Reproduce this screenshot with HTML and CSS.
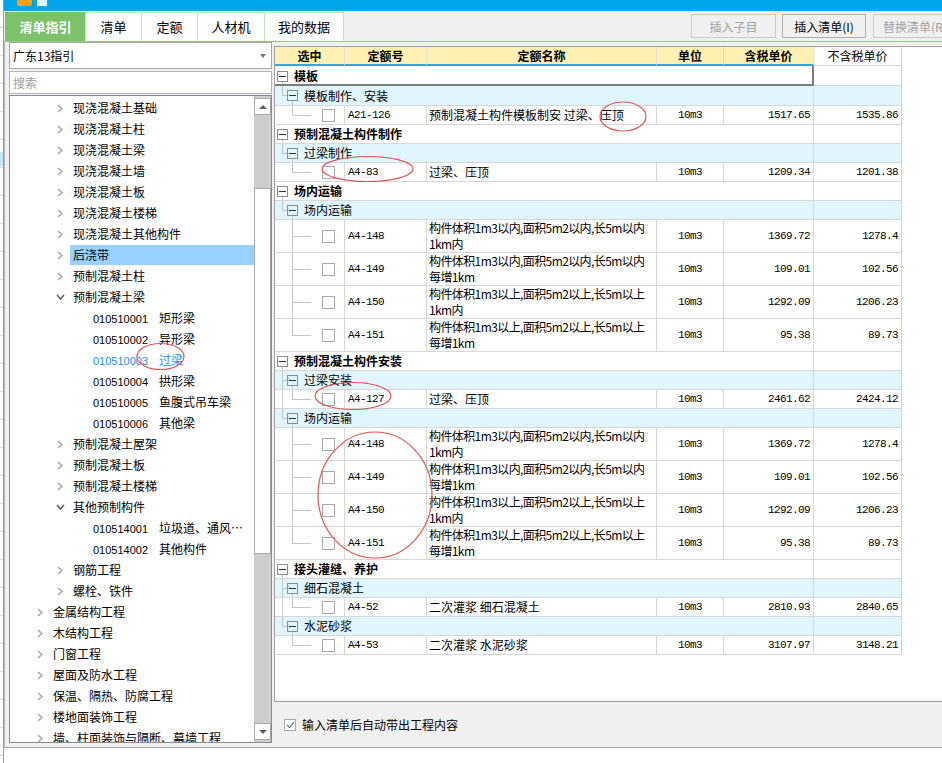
FILE: index.html
```html
<!DOCTYPE html>
<html lang="zh-CN">
<head>
<meta charset="utf-8">
<title>清单指引</title>
<link rel="stylesheet" href="styles.css">
</head>
<body>
<div class="bgstrip"></div>
<div class="dialog">
  <div class="titlebar"><span class="appicon"></span><span class="appmark"></span></div>
  <div class="toolbar">
    <div class="tabs">
      <div class="tab active">清单指引</div>
      <div class="tab w56">清单</div>
      <div class="tab w56">定额</div>
      <div class="tab w67">人材机</div>
      <div class="tab">我的数据</div>
    </div>
    <div class="tbtns">
      <button class="btn dis">插入子目</button>
      <button class="btn b2">插入清单(I)</button>
      <button class="btn dis b3">替换清单(R)</button>
    </div>
  </div>
  <div class="main">
    <div class="left">
      <div class="combo"><span>广东13指引</span><span class="caret"></span></div>
      <div class="search">搜索</div>
      <div class="tree">
        <div class="tlist">
          <div class="tr l2"><span class="chev"><svg width="6" height="9" viewBox="0 0 6 9"><path d="M1 1l4 3.5L1 8" fill="none" stroke="#a6a6a6" stroke-width="1.5"/></svg></span><span class="lbl">现浇混凝土基础</span></div>
          <div class="tr l2"><span class="chev"><svg width="6" height="9" viewBox="0 0 6 9"><path d="M1 1l4 3.5L1 8" fill="none" stroke="#a6a6a6" stroke-width="1.5"/></svg></span><span class="lbl">现浇混凝土柱</span></div>
          <div class="tr l2"><span class="chev"><svg width="6" height="9" viewBox="0 0 6 9"><path d="M1 1l4 3.5L1 8" fill="none" stroke="#a6a6a6" stroke-width="1.5"/></svg></span><span class="lbl">现浇混凝土梁</span></div>
          <div class="tr l2"><span class="chev"><svg width="6" height="9" viewBox="0 0 6 9"><path d="M1 1l4 3.5L1 8" fill="none" stroke="#a6a6a6" stroke-width="1.5"/></svg></span><span class="lbl">现浇混凝土墙</span></div>
          <div class="tr l2"><span class="chev"><svg width="6" height="9" viewBox="0 0 6 9"><path d="M1 1l4 3.5L1 8" fill="none" stroke="#a6a6a6" stroke-width="1.5"/></svg></span><span class="lbl">现浇混凝土板</span></div>
          <div class="tr l2"><span class="chev"><svg width="6" height="9" viewBox="0 0 6 9"><path d="M1 1l4 3.5L1 8" fill="none" stroke="#a6a6a6" stroke-width="1.5"/></svg></span><span class="lbl">现浇混凝土楼梯</span></div>
          <div class="tr l2"><span class="chev"><svg width="6" height="9" viewBox="0 0 6 9"><path d="M1 1l4 3.5L1 8" fill="none" stroke="#a6a6a6" stroke-width="1.5"/></svg></span><span class="lbl">现浇混凝土其他构件</span></div>
          <div class="tr l2 sel"><span class="chev"><svg width="6" height="9" viewBox="0 0 6 9"><path d="M1 1l4 3.5L1 8" fill="none" stroke="#a6a6a6" stroke-width="1.5"/></svg></span><span class="lbl">后浇带</span></div>
          <div class="tr l2"><span class="chev"><svg width="6" height="9" viewBox="0 0 6 9"><path d="M1 1l4 3.5L1 8" fill="none" stroke="#a6a6a6" stroke-width="1.5"/></svg></span><span class="lbl">预制混凝土柱</span></div>
          <div class="tr l2"><span class="chev"><svg width="9" height="6" viewBox="0 0 9 6"><path d="M1 1l3.5 4L8 1" fill="none" stroke="#5a5a5a" stroke-width="1.5"/></svg></span><span class="lbl">预制混凝土梁</span></div>
          <div class="tr l3"><span class="chev"></span><span class="lbl"><span class="tcode">010510001</span>矩形梁</span></div>
          <div class="tr l3"><span class="chev"></span><span class="lbl"><span class="tcode">010510002</span>异形梁</span></div>
          <div class="tr l3 hl"><span class="chev"></span><span class="lbl"><span class="tcode">010510003</span>过梁</span></div>
          <div class="tr l3"><span class="chev"></span><span class="lbl"><span class="tcode">010510004</span>拱形梁</span></div>
          <div class="tr l3"><span class="chev"></span><span class="lbl"><span class="tcode">010510005</span>鱼腹式吊车梁</span></div>
          <div class="tr l3"><span class="chev"></span><span class="lbl"><span class="tcode">010510006</span>其他梁</span></div>
          <div class="tr l2"><span class="chev"><svg width="6" height="9" viewBox="0 0 6 9"><path d="M1 1l4 3.5L1 8" fill="none" stroke="#a6a6a6" stroke-width="1.5"/></svg></span><span class="lbl">预制混凝土屋架</span></div>
          <div class="tr l2"><span class="chev"><svg width="6" height="9" viewBox="0 0 6 9"><path d="M1 1l4 3.5L1 8" fill="none" stroke="#a6a6a6" stroke-width="1.5"/></svg></span><span class="lbl">预制混凝土板</span></div>
          <div class="tr l2"><span class="chev"><svg width="6" height="9" viewBox="0 0 6 9"><path d="M1 1l4 3.5L1 8" fill="none" stroke="#a6a6a6" stroke-width="1.5"/></svg></span><span class="lbl">预制混凝土楼梯</span></div>
          <div class="tr l2"><span class="chev"><svg width="9" height="6" viewBox="0 0 9 6"><path d="M1 1l3.5 4L8 1" fill="none" stroke="#5a5a5a" stroke-width="1.5"/></svg></span><span class="lbl">其他预制构件</span></div>
          <div class="tr l3"><span class="chev"></span><span class="lbl"><span class="tcode">010514001</span>垃圾道、通风…</span></div>
          <div class="tr l3"><span class="chev"></span><span class="lbl"><span class="tcode">010514002</span>其他构件</span></div>
          <div class="tr l2"><span class="chev"><svg width="6" height="9" viewBox="0 0 6 9"><path d="M1 1l4 3.5L1 8" fill="none" stroke="#a6a6a6" stroke-width="1.5"/></svg></span><span class="lbl">钢筋工程</span></div>
          <div class="tr l2"><span class="chev"><svg width="6" height="9" viewBox="0 0 6 9"><path d="M1 1l4 3.5L1 8" fill="none" stroke="#a6a6a6" stroke-width="1.5"/></svg></span><span class="lbl">螺栓、铁件</span></div>
          <div class="tr l1"><span class="chev"><svg width="6" height="9" viewBox="0 0 6 9"><path d="M1 1l4 3.5L1 8" fill="none" stroke="#a6a6a6" stroke-width="1.5"/></svg></span><span class="lbl">金属结构工程</span></div>
          <div class="tr l1"><span class="chev"><svg width="6" height="9" viewBox="0 0 6 9"><path d="M1 1l4 3.5L1 8" fill="none" stroke="#a6a6a6" stroke-width="1.5"/></svg></span><span class="lbl">木结构工程</span></div>
          <div class="tr l1"><span class="chev"><svg width="6" height="9" viewBox="0 0 6 9"><path d="M1 1l4 3.5L1 8" fill="none" stroke="#a6a6a6" stroke-width="1.5"/></svg></span><span class="lbl">门窗工程</span></div>
          <div class="tr l1"><span class="chev"><svg width="6" height="9" viewBox="0 0 6 9"><path d="M1 1l4 3.5L1 8" fill="none" stroke="#a6a6a6" stroke-width="1.5"/></svg></span><span class="lbl">屋面及防水工程</span></div>
          <div class="tr l1"><span class="chev"><svg width="6" height="9" viewBox="0 0 6 9"><path d="M1 1l4 3.5L1 8" fill="none" stroke="#a6a6a6" stroke-width="1.5"/></svg></span><span class="lbl">保温、隔热、防腐工程</span></div>
          <div class="tr l1"><span class="chev"><svg width="6" height="9" viewBox="0 0 6 9"><path d="M1 1l4 3.5L1 8" fill="none" stroke="#a6a6a6" stroke-width="1.5"/></svg></span><span class="lbl">楼地面装饰工程</span></div>
          <div class="tr l1"><span class="chev"><svg width="6" height="9" viewBox="0 0 6 9"><path d="M1 1l4 3.5L1 8" fill="none" stroke="#a6a6a6" stroke-width="1.5"/></svg></span><span class="lbl">墙、柱面装饰与隔断、幕墙工程</span></div>
        </div>
        <div class="vscroll">
          <div class="sbtn up"></div>
          <div class="gap1"></div>
          <div class="thumb"></div>
          <div class="gap2"></div>
          <div class="sbtn down"></div>
        </div>
      </div>
    </div>
    <div class="right">
      <div class="gridwrap">
        <div class="grid">
          <div class="c hd">选中</div><div class="c hd">定额号</div><div class="c hd">定额名称</div><div class="c hd">单位</div><div class="c hd">含税单价</div><div class="c hd nt">不含税单价</div>

          <div class="c span5 cat focus"><i class="bx"></i>模板</div><div class="c lc"></div>
          <div class="c span5 sub"><i class="bx"></i>模板制作、安装</div><div class="c lc subc"></div>
          <div class="c sl"><i class="cb"></i></div><div class="c no mono">A21-126</div><div class="c nm">预制混凝土构件模板制安 过梁、压顶</div><div class="c un mono">10m3</div><div class="c pr mono">1517.65</div><div class="c pr mono lc">1535.86</div>

          <div class="c span5 cat"><i class="bx"></i>预制混凝土构件制作</div><div class="c lc"></div>
          <div class="c span5 sub"><i class="bx"></i>过梁制作</div><div class="c lc subc"></div>
          <div class="c sl"><i class="cb"></i></div><div class="c no mono">A4-83</div><div class="c nm">过梁、压顶</div><div class="c un mono">10m3</div><div class="c pr mono">1209.34</div><div class="c pr mono lc">1201.38</div>

          <div class="c span5 cat"><i class="bx"></i>场内运输</div><div class="c lc"></div>
          <div class="c span5 sub"><i class="bx"></i>场内运输</div><div class="c lc subc"></div>
          <div class="c sl cont"><i class="cb"></i></div><div class="c no mono">A4-148</div><div class="c nm two"><span>构件体积1m3以内,面积5m2以内,长5m以内</span><span>1km内</span></div><div class="c un mono">10m3</div><div class="c pr mono">1369.72</div><div class="c pr mono lc">1278.4</div>
          <div class="c sl cont"><i class="cb"></i></div><div class="c no mono">A4-149</div><div class="c nm two"><span>构件体积1m3以内,面积5m2以内,长5m以内</span><span>每增1km</span></div><div class="c un mono">10m3</div><div class="c pr mono">109.01</div><div class="c pr mono lc">102.56</div>
          <div class="c sl cont"><i class="cb"></i></div><div class="c no mono">A4-150</div><div class="c nm two"><span>构件体积1m3以上,面积5m2以上,长5m以上</span><span>1km内</span></div><div class="c un mono">10m3</div><div class="c pr mono">1292.09</div><div class="c pr mono lc">1206.23</div>
          <div class="c sl"><i class="cb"></i></div><div class="c no mono">A4-151</div><div class="c nm two"><span>构件体积1m3以上,面积5m2以上,长5m以上</span><span>每增1km</span></div><div class="c un mono">10m3</div><div class="c pr mono">95.38</div><div class="c pr mono lc">89.73</div>

          <div class="c span5 cat"><i class="bx"></i>预制混凝土构件安装</div><div class="c lc"></div>
          <div class="c span5 sub more"><i class="bx"></i>过梁安装</div><div class="c lc subc"></div>
          <div class="c sl more"><i class="cb"></i></div><div class="c no mono">A4-127</div><div class="c nm">过梁、压顶</div><div class="c un mono">10m3</div><div class="c pr mono">2461.62</div><div class="c pr mono lc">2424.12</div>
          <div class="c span5 sub"><i class="bx"></i>场内运输</div><div class="c lc subc"></div>
          <div class="c sl cont"><i class="cb"></i></div><div class="c no mono">A4-148</div><div class="c nm two"><span>构件体积1m3以内,面积5m2以内,长5m以内</span><span>1km内</span></div><div class="c un mono">10m3</div><div class="c pr mono">1369.72</div><div class="c pr mono lc">1278.4</div>
          <div class="c sl cont"><i class="cb"></i></div><div class="c no mono">A4-149</div><div class="c nm two"><span>构件体积1m3以内,面积5m2以内,长5m以内</span><span>每增1km</span></div><div class="c un mono">10m3</div><div class="c pr mono">109.01</div><div class="c pr mono lc">102.56</div>
          <div class="c sl cont"><i class="cb"></i></div><div class="c no mono">A4-150</div><div class="c nm two"><span>构件体积1m3以上,面积5m2以上,长5m以上</span><span>1km内</span></div><div class="c un mono">10m3</div><div class="c pr mono">1292.09</div><div class="c pr mono lc">1206.23</div>
          <div class="c sl"><i class="cb"></i></div><div class="c no mono">A4-151</div><div class="c nm two"><span>构件体积1m3以上,面积5m2以上,长5m以上</span><span>每增1km</span></div><div class="c un mono">10m3</div><div class="c pr mono">95.38</div><div class="c pr mono lc">89.73</div>

          <div class="c span5 cat"><i class="bx"></i>接头灌缝、养护</div><div class="c lc"></div>
          <div class="c span5 sub more"><i class="bx"></i>细石混凝土</div><div class="c lc subc"></div>
          <div class="c sl more"><i class="cb"></i></div><div class="c no mono">A4-52</div><div class="c nm">二次灌浆 细石混凝土</div><div class="c un mono">10m3</div><div class="c pr mono">2810.93</div><div class="c pr mono lc">2840.65</div>
          <div class="c span5 sub"><i class="bx"></i>水泥砂浆</div><div class="c lc subc"></div>
          <div class="c sl"><i class="cb"></i></div><div class="c no mono">A4-53</div><div class="c nm">二次灌浆 水泥砂浆</div><div class="c un mono">10m3</div><div class="c pr mono">3107.97</div><div class="c pr mono lc">3148.21</div>
        </div>
      </div>
      <div class="opt">
        <span class="ck"><svg width="9" height="8" viewBox="0 0 9 8"><path d="M1 4l2.5 2.5L8 1" fill="none" stroke="#7a7a7a" stroke-width="1.2"/></svg></span>
        <span>输入清单后自动带出工程内容</span>
      </div>
    </div>
  </div>
</div>
<svg class="marks" width="942" height="763" viewBox="0 0 942 763">
  <g fill="none" stroke="#e05656" stroke-width="1.2">
    <ellipse cx="623" cy="116.5" rx="23" ry="14.5"/>
    <ellipse cx="367.5" cy="169" rx="45.5" ry="12.5"/>
    <ellipse cx="353" cy="396" rx="38" ry="13.5"/>
    <ellipse cx="375" cy="495" rx="57" ry="63"/>
    <ellipse cx="160.5" cy="356.5" rx="23.5" ry="13"/>
  </g>
</svg>
</body>
</html>
```
FILE: styles.css
```css
* { box-sizing: border-box; margin: 0; padding: 0; }
html, body { width: 942px; height: 763px; }
body {
  position: relative;
  display: flex;
  align-items: flex-start;
  overflow: hidden;
  background: #fff;
  font-family: "Noto Sans CJK SC", "Noto Sans", sans-serif;
  font-size: 12px;
  line-height: 14px;
  color: #000;
}

/* background app sliver */
.bgstrip {
  flex: none;
  width: 4px;
  height: 763px;
  border-right: 1px solid #9a9a9a;
  background:
    linear-gradient(#c6e6f8, #c6e6f8) 0 152px / 100% 14px no-repeat,
    repeating-linear-gradient(to bottom, #fff 0, #fff 27px, #d9d9d9 27px, #d9d9d9 28px);
}

.dialog {
  flex: none;
  width: 938px;
  height: 748px;
  display: flex;
  flex-direction: column;
  background: #f0f0f0;
  border-bottom: 1px solid #a9a9a9;
}

.titlebar {
  flex: none;
  height: 11px;
  background: #00a6ea;
  overflow: hidden;
  display: flex;
  align-items: flex-end;
  padding-left: 13px;
  gap: 5px;
}
.appicon { width: 15px; height: 14px; background: #f7a21b; border-radius: 2px; margin-bottom: 5px; }
.appmark { width: 10px; height: 6px; background: #e8f6fd; margin-bottom: 5px; }

.toolbar {
  flex: none;
  height: 31px;
  display: flex;
  align-items: flex-end;
  padding-left: 1px;
  border-bottom: 1px solid #98cc86;
}
.tabs { flex: none; display: flex; }
.tab {
  flex: none;
  width: 80px;
  height: 29px;
  border-top: 1px solid #c8e8bc;
  border-left: 1px solid #c8e8bc;
  background: #fff;
  display: flex;
  align-items: center;
  justify-content: center;
  font-size: 13px;
}
.tab:last-child { border-right: 1px solid #c8e8bc; }
.tab.active { background: #7cc26a; color: #fff; font-weight: bold; border-color: #7cc26a; }
.w56 { width: 56px; }
.w67 { width: 67px; }

.tbtns { flex: none; display: flex; align-self: flex-start; margin-top: 3px; margin-left: 347px; }
.btn {
  flex: none;
  width: 85px;
  height: 24px;
  border: 1px solid #adadad;
  background: #f0f0f0;
  font: 12px "Noto Sans CJK SC", sans-serif;
  color: #000;
  display: flex;
  align-items: center;
  justify-content: center;
  white-space: nowrap;
}
.btn.b2 { width: 84px; margin-left: 6px; }
.btn.b3 { margin-left: 7px; justify-content: flex-start; padding-left: 9px; overflow: hidden; }
.btn.dis { color: #a3a3a3; border-color: #cacaca; }

.main { flex: none; height: 705px; display: flex; }

/* left guide panel */
.left {
  flex: none;
  width: 270px;
  border-left: 1px solid #b9b9b9;
  padding: 0 2px 0 4px;
  display: flex;
  flex-direction: column;
}
.combo {
  flex: none;
  height: 27px;
  border: 1px solid #a5a5a5;
  background: #fff;
  display: flex;
  align-items: center;
  justify-content: space-between;
  padding: 0 5px 0 3px;
  margin-bottom: 2px;
}
.caret { width: 0; height: 0; border-left: 3.5px solid transparent; border-right: 3.5px solid transparent; border-top: 4px solid #777; }
.search {
  flex: none;
  height: 23px;
  border: 1px solid #b4b4b4;
  background: #fff;
  color: #a0a0a0;
  padding-left: 3px;
  display: flex;
  align-items: center;
  margin-bottom: 1px;
}
.tree {
  flex: none;
  height: 648px;
  border: 1px solid #868b94;
  background: #fff;
  display: flex;
  overflow: hidden;
}
.tlist { flex: 1; min-width: 0; padding-top: 2px; overflow: hidden; }
.tr { display: flex; height: 21px; white-space: nowrap; }
.l1 { padding-left: 20px; }
.l2 { padding-left: 40px; }
.l3 { padding-left: 60px; }
.chev { flex: none; width: 20px; height: 20px; display: flex; align-items: center; justify-content: center; }
.lbl { flex: 1; min-width: 0; height: 20px; line-height: 20px; padding-left: 3px; overflow: hidden; }
.sel .lbl { background: #99d1ff; }
.hl .lbl { color: #1e8cf0; }
.tcode { display: inline-block; width: 66px; font-family: "Liberation Sans", sans-serif; font-size: 11px; }

.vscroll { flex: none; width: 17px; background: #cdcdcd; display: flex; flex-direction: column; padding: 2px 0; }
.sbtn { flex: none; height: 17px; background: #fff; border: 1px solid #a8a8a8; display: flex; align-items: center; justify-content: center; }
.up::after { content: ""; border-left: 4px solid transparent; border-right: 4px solid transparent; border-bottom: 4px solid #606060; }
.down::after { content: ""; border-left: 4px solid transparent; border-right: 4px solid transparent; border-top: 4px solid #606060; }
.gap1 { flex: none; height: 73px; }
.thumb { flex: none; height: 366px; background: #fff; border: 1px solid #a8a8a8; }
.gap2 { flex: 1; }

/* right quota panel */
.right { flex: 1; min-width: 0; display: flex; flex-direction: column; padding-top: 4px; }
.gridwrap { flex: none; height: 656px; background: #fff; border: 1px solid #a0a0a0; border-right: none; }
.grid {
  display: grid;
  width: 627px;
  grid-template-columns: 70px 82px 230px 67px 90px 88px;
  grid-template-rows: 19px 20px 20px repeat(6, 19px) repeat(4, 33px) repeat(4, 19px) repeat(4, 33px) repeat(5, 19px);
}
.c {
  display: flex;
  align-items: center;
  border-right: 1px solid #d7d7d7;
  border-bottom: 1px solid #d7d7d7;
  white-space: nowrap;
  overflow: hidden;
  min-width: 0;
}
.hd { background: #fff0b4; border-right-color: #e4dfcf; border-bottom: 2px solid #3ba3d8; font-weight: bold; justify-content: center; }
.hd.nt { background: #fff; font-weight: normal; border-bottom: 1px solid #d7d7d7; border-right-color: #d0d0d0; }
.span5 { grid-column: span 5; }
.lc { border-right-color: #d0d0d0; }

.bx {
  flex: none;
  width: 11px;
  height: 11px;
  border: 1px solid #8c8c8c;
  margin-right: 6px;
  background: linear-gradient(#333, #333) center / 7px 1px no-repeat;
}
.cat {
  font-weight: bold;
  padding-left: 2px;
  background: linear-gradient(#c4c4c4, #c4c4c4) 7px 100% / 1px 4px no-repeat;
}
.focus { border-right: none; border-bottom: none; box-shadow: inset -2px -2px 0 #7d7d7d; }
.sub {
  padding-left: 12px;
  background:
    linear-gradient(#c4c4c4, #c4c4c4) 7px 0 / 1px 50% no-repeat,
    linear-gradient(#c4c4c4, #c4c4c4) 7px 50% / 5px 1px no-repeat,
    linear-gradient(#c4c4c4, #c4c4c4) 17px 100% / 1px 4px no-repeat,
    #e1f5fe;
}
.sub.more {
  background:
    linear-gradient(#c4c4c4, #c4c4c4) 7px 0 / 1px 100% no-repeat,
    linear-gradient(#c4c4c4, #c4c4c4) 7px 50% / 5px 1px no-repeat,
    linear-gradient(#c4c4c4, #c4c4c4) 17px 100% / 1px 4px no-repeat,
    #e1f5fe;
}
.subc { background: #e1f5fe; }

.sl {
  padding-left: 47px;
  background:
    linear-gradient(#c4c4c4, #c4c4c4) 17px 0 / 1px 50% no-repeat,
    linear-gradient(#c4c4c4, #c4c4c4) 17px 50% / 19px 1px no-repeat;
}
.sl.cont {
  background:
    linear-gradient(#c4c4c4, #c4c4c4) 17px 0 / 1px 100% no-repeat,
    linear-gradient(#c4c4c4, #c4c4c4) 17px 50% / 19px 1px no-repeat;
}
.sl.more {
  background:
    linear-gradient(#c4c4c4, #c4c4c4) 7px 0 / 1px 100% no-repeat,
    linear-gradient(#c4c4c4, #c4c4c4) 17px 0 / 1px 50% no-repeat,
    linear-gradient(#c4c4c4, #c4c4c4) 17px 50% / 19px 1px no-repeat;
}
.cb { flex: none; width: 13px; height: 13px; border: 1px solid #a9a9a9; background: #fff; }

.mono { font-family: "Liberation Mono", monospace; font-size: 11px; letter-spacing: -0.6px; }
.no { padding-left: 3px; }
.nm { padding-left: 2px; }
.two { flex-direction: column; align-items: flex-start; justify-content: flex-start; padding-top: 0; line-height: 16px; }
.two span { display: block; height: 16px; letter-spacing: -0.6px; }
.un { justify-content: center; }
.pr { justify-content: flex-end; padding-right: 3px; }

.opt { flex: none; height: 45px; display: flex; align-items: center; padding-left: 10px; gap: 6px; }
.ck { flex: none; width: 12px; height: 12px; border: 1px solid #a8a8a8; background: #fff; display: flex; align-items: center; justify-content: center; }

.marks { position: absolute; left: 0; top: 0; width: 942px; height: 763px; pointer-events: none; }
```
